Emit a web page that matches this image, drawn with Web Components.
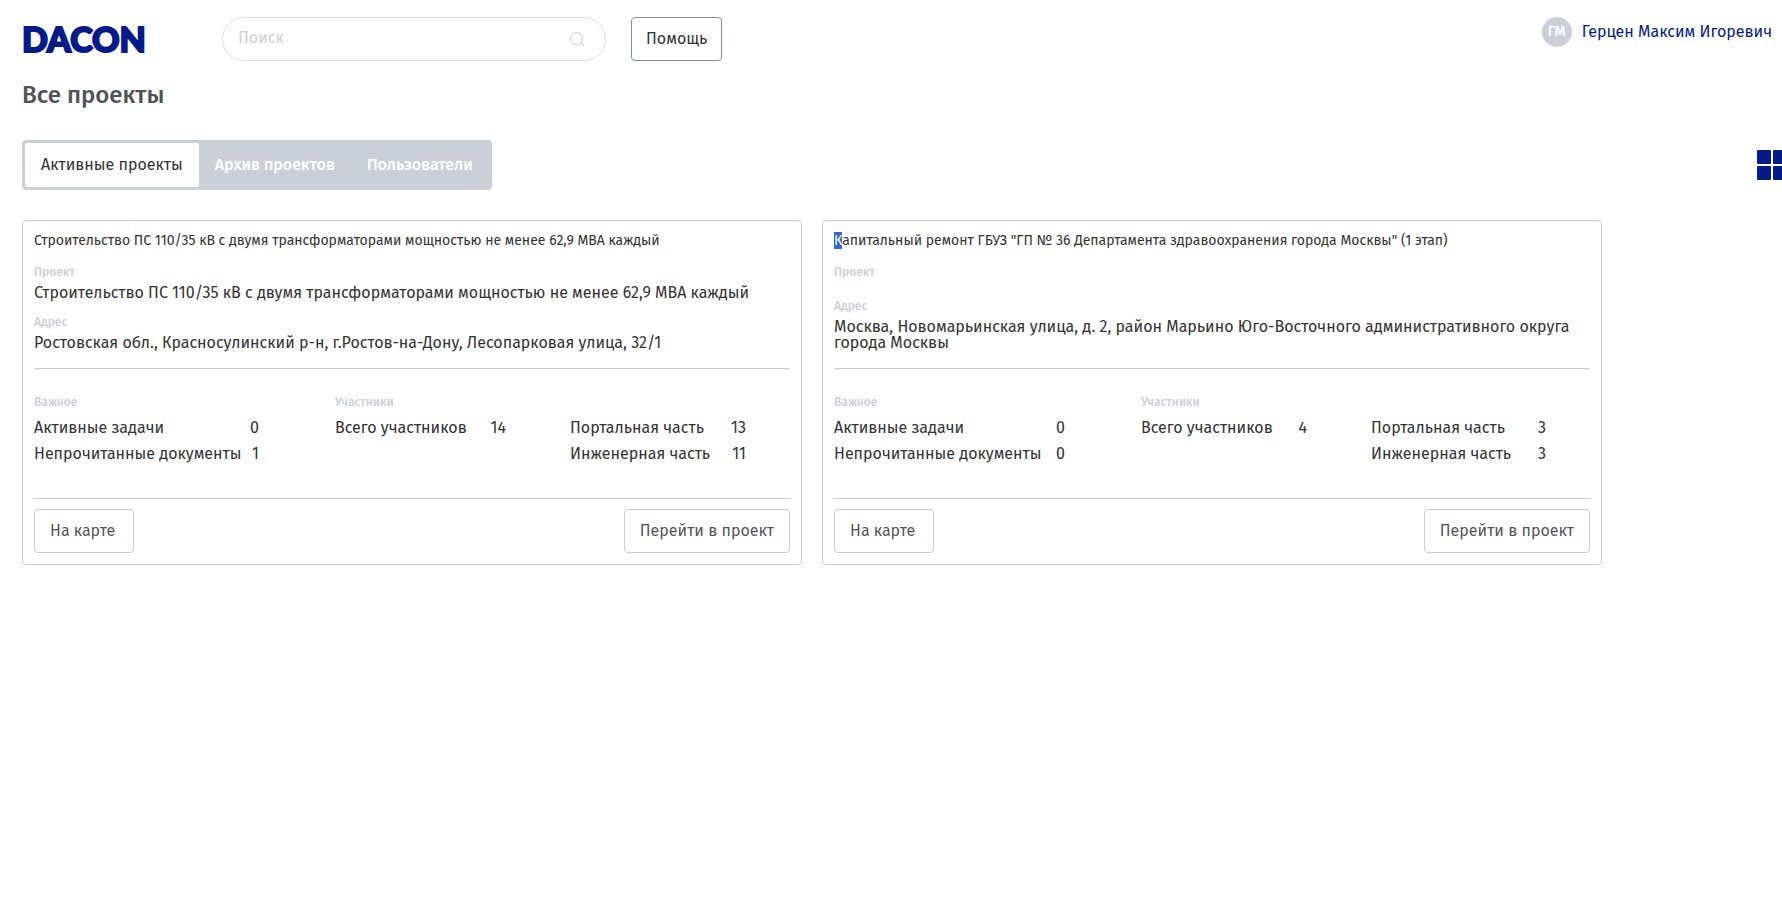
<!DOCTYPE html>
<html lang="ru">
<head>
<meta charset="utf-8">
<meta name="viewport" content="width=device-width, initial-scale=1">
<title>Все проекты</title>
<style>
    body {
        margin: 0;
        background: #fff;
        color: #333;
        font: 400 16px/16px "Fira Sans", "Noto Sans", sans-serif;
        overflow-x: hidden;
        --navy: #051b87;
        --muted: #cbcfd8;
        --line: #c9cbd0;
    }
</style>
</head>
<body>
<projects-page>
    <app-header slot="header" user="Герцен Максим Игоревич" initials="ГМ"></app-header>
    <project-tabs slot="tabs"></project-tabs>
    <project-card style="--split: 301fr 235fr 220fr">
        <span slot="title">Строительство ПС 110/35 кВ с двумя трансформаторами мощностью не менее 62,9 МВА каждый</span>
        <labeled-field slot="field" label="Проект">Строительство ПС 110/35 кВ с двумя трансформаторами мощностью не менее 62,9 МВА каждый</labeled-field>
        <labeled-field slot="field" label="Адрес">Ростовская обл., Красносулинский р-н, г.Ростов-на-Дону, Лесопарковая улица, 32/1</labeled-field>
        <stat-group slot="stats" label="Важное" gap="wide">
            <stat-row value="0">Активные задачи</stat-row>
            <stat-row value="1">Непрочитанные документы</stat-row>
        </stat-group>
        <stat-group slot="stats" label="Участники">
            <stat-row value="14">Всего участников</stat-row>
        </stat-group>
        <stat-group slot="stats" gap="narrow">
            <stat-row value="13">Портальная часть</stat-row>
            <stat-row value="11">Инженерная часть</stat-row>
        </stat-group>
    </project-card>
    <project-card style="--split: 307fr 230fr 219fr">
        <span slot="title"><mark>К</mark>апитальный ремонт ГБУЗ "ГП № 36 Департамента здравоохранения города Москвы" (1 этап)</span>
        <labeled-field slot="field" label="Проект"></labeled-field>
        <labeled-field slot="field" label="Адрес">Москва, Новомарьинская улица, д. 2, район Марьино Юго-Восточного административного округа города Москвы</labeled-field>
        <stat-group slot="stats" label="Важное" gap="wide">
            <stat-row value="0">Активные задачи</stat-row>
            <stat-row value="0">Непрочитанные документы</stat-row>
        </stat-group>
        <stat-group slot="stats" label="Участники">
            <stat-row value="4">Всего участников</stat-row>
        </stat-group>
        <stat-group slot="stats" gap="narrow">
            <stat-row value="3">Портальная часть</stat-row>
            <stat-row value="3">Инженерная часть</stat-row>
        </stat-group>
    </project-card>
</projects-page>

<script>
class ProjectsPage extends HTMLElement {
    constructor() {
        super();
        this.attachShadow({ mode: "open" });
        this.shadowRoot.innerHTML = `
            <style>
                :host { display: block; }
                h1 {
                    margin: 19px 22px 29px;
                    color: #4f5256;
                    font-size: 24px;
                    font-weight: 500;
                    line-height: 31px;
                }
                .cards {
                    display: flex;
                    align-items: stretch;
                    gap: 20px;
                    padding: 30px 22px;
                }
                ::slotted(project-card) {
                    flex: 0 1 780px;
                    min-width: 0;
                }
            </style>
            <slot name="header"></slot>
            <main>
                <h1>Все проекты</h1>
                <slot name="tabs"></slot>
                <div class="cards"><slot></slot></div>
            </main>
        `;
    }
}

class AppHeader extends HTMLElement {
    constructor() {
        super();
        this.attachShadow({ mode: "open" });
    }

    connectedCallback() {
        this.shadowRoot.innerHTML = `
            <style>
                :host { display: block; }
                header {
                    display: flex;
                    align-items: flex-start;
                    padding: 17px 10px 0 22px;
                }
                .logo {
                    width: 200px;
                    color: var(--navy);
                    font: 900 34px/44px Lato, sans-serif;
                    text-decoration: none;
                    -webkit-text-stroke: 2px var(--navy);
                }
                .search {
                    display: flex;
                    align-items: center;
                    box-sizing: border-box;
                    width: 384px;
                    height: 44px;
                    margin-right: 25px;
                    padding: 0 20px 0 15px;
                    border: 1px solid #dcdee2;
                    border-radius: 22px;
                }
                input {
                    flex: 1;
                    min-width: 0;
                    padding: 0 0 2px;
                    border: 0;
                    outline: 0;
                    background: none;
                    color: inherit;
                    font: inherit;
                    line-height: 20px;
                }
                input::placeholder {
                    color: var(--muted);
                    opacity: 1;
                }
                .help {
                    height: 44px;
                    padding: 0 14px;
                    border: 1px solid #868c98;
                    border-radius: 4px;
                    background: #fff;
                    color: #333;
                    font: inherit;
                }
                .user {
                    display: flex;
                    align-items: center;
                    gap: 10px;
                    margin-left: auto;
                    color: var(--navy);
                    text-decoration: none;
                }
                .avatar {
                    width: 30px;
                    border-radius: 50%;
                    background: var(--muted);
                    color: #fff;
                    font-size: 14px;
                    font-weight: 500;
                    line-height: 30px;
                    text-align: center;
                }
            </style>
            <header>
                <a class="logo" href="#">DACON</a>
                <div class="search">
                    <input type="text" placeholder="Поиск" aria-label="Поиск">
                    <svg width="16" height="16" viewBox="0 0 16 16" fill="none" stroke="#c6cad3" aria-hidden="true">
                        <circle cx="7.5" cy="7.5" r="6"/>
                        <path d="M11.8 11.8 15 15"/>
                    </svg>
                </div>
                <button class="help" type="button">Помощь</button>
                <a class="user" href="#">
                    <span class="avatar">${this.getAttribute("initials")}</span>
                    <span>${this.getAttribute("user")}</span>
                </a>
            </header>
        `;
    }
}

class ProjectTabs extends HTMLElement {
    constructor() {
        super();
        this.attachShadow({ mode: "open" });
        this.shadowRoot.innerHTML = `
            <style>
                :host {
                    display: flex;
                    align-items: center;
                    justify-content: space-between;
                    padding-left: 22px;
                    overflow: hidden;
                }
                .tabs {
                    display: flex;
                    padding: 3px;
                    border-radius: 4px;
                    background: var(--muted);
                }
                .tabs button {
                    height: 44px;
                    padding: 0 16px;
                    border: 0;
                    border-radius: 2px;
                    background: none;
                    color: #fff;
                    font: inherit;
                    font-weight: 500;
                }
                .tabs button[aria-selected="true"] {
                    background: #fff;
                    color: #333;
                    font-weight: 400;
                }
                /* the grid toggle runs past the right edge of the window */
                .view {
                    display: grid;
                    margin-right: -5px;
                    padding: 0;
                    border: 0;
                    background: none;
                }
            </style>
            <div class="tabs" role="tablist">
                <button type="button" role="tab" aria-selected="true">Активные проекты</button>
                <button type="button" role="tab" aria-selected="false">Архив проектов</button>
                <button type="button" role="tab" aria-selected="false">Пользователи</button>
            </div>
            <button class="view" type="button" aria-label="Плитка">
                <svg width="30" height="30" viewBox="0 0 30 30" fill="#051b87">
                    <rect width="14" height="14" rx="1"/>
                    <rect x="16" width="14" height="14" rx="1"/>
                    <rect y="16" width="14" height="14" rx="1"/>
                    <rect x="16" y="16" width="14" height="14" rx="1"/>
                </svg>
            </button>
        `;
        this.tabs = this.shadowRoot.querySelectorAll("[role=tab]");
        this.tabs.forEach((tab) => tab.addEventListener("click", () => this.select(tab)));
    }

    select(active) {
        this.tabs.forEach((tab) => tab.setAttribute("aria-selected", tab === active));
    }
}

class ProjectCard extends HTMLElement {
    constructor() {
        super();
        this.attachShadow({ mode: "open" });
        this.shadowRoot.innerHTML = `
            <style>
                :host {
                    display: flex;
                    flex-direction: column;
                    box-sizing: border-box;
                    padding: 11px;
                    border: 1px solid var(--line);
                    border-radius: 4px;
                }
                h2 {
                    margin: 0 0 16px;
                    font-size: 14px;
                    font-weight: 400;
                    line-height: 17px;
                }
                .fields {
                    display: flex;
                    flex-direction: column;
                    gap: 14px;
                    padding-bottom: 17px;
                }
                .stats {
                    display: grid;
                    grid-template-columns: var(--split);
                    padding: 26px 0 31px;
                    border: solid var(--line);
                    border-width: 1px 0;
                }
                .actions {
                    display: flex;
                    justify-content: space-between;
                    padding-top: 10px;
                }
                button {
                    min-width: 100px;
                    height: 44px;
                    padding: 0 15px;
                    border: 1px solid var(--line);
                    border-radius: 4px;
                    background: #fff;
                    color: #555;
                    font: inherit;
                    text-align: left;
                }
            </style>
            <h2><slot name="title"></slot></h2>
            <div class="fields"><slot name="field"></slot></div>
            <div class="stats"><slot name="stats"></slot></div>
            <div class="actions">
                <button type="button">На карте</button>
                <button type="button">Перейти в проект</button>
            </div>
        `;
        // slotted text keeps the browser's yellow <mark>, so it is coloured from here
        this.querySelectorAll("mark").forEach((mark) => {
            mark.style.background = "#3367c8";
            mark.style.color = "#fff";
        });
    }
}

class LabeledField extends HTMLElement {
    constructor() {
        super();
        this.attachShadow({ mode: "open" });
    }

    connectedCallback() {
        this.shadowRoot.innerHTML = `
            <style>
                :host { display: block; }
                .label {
                    margin-bottom: 6px;
                    color: var(--muted);
                    font-size: 12px;
                    font-weight: 500;
                    line-height: 14px;
                }
            </style>
            <div class="label">${this.getAttribute("label")}</div>
            <div><slot></slot></div>
        `;
    }
}

class StatGroup extends HTMLElement {
    constructor() {
        super();
        this.attachShadow({ mode: "open" });
    }

    connectedCallback() {
        this.shadowRoot.innerHTML = `
            <style>
                :host {
                    display: block;
                    padding-right: 64px;
                }
                :host([gap="wide"]) { padding-right: 76px; }
                :host([gap="narrow"]) { padding-right: 44px; }
                .label {
                    height: 14px;
                    margin-bottom: 6px;
                    color: var(--muted);
                    font-size: 12px;
                    font-weight: 500;
                    line-height: 14px;
                }
            </style>
            <div class="label">${this.getAttribute("label") || ""}</div>
            <slot></slot>
        `;
    }
}

class StatRow extends HTMLElement {
    constructor() {
        super();
        this.attachShadow({ mode: "open" });
    }

    connectedCallback() {
        this.shadowRoot.innerHTML = `
            <style>
                :host {
                    display: flex;
                    justify-content: space-between;
                    line-height: 26px;
                    white-space: nowrap;
                }
            </style>
            <span><slot></slot></span>
            <span>${this.getAttribute("value")}</span>
        `;
    }
}

customElements.define("stat-row", StatRow);
customElements.define("stat-group", StatGroup);
customElements.define("labeled-field", LabeledField);
customElements.define("project-card", ProjectCard);
customElements.define("project-tabs", ProjectTabs);
customElements.define("app-header", AppHeader);
customElements.define("projects-page", ProjectsPage);
</script>
</body>
</html>
